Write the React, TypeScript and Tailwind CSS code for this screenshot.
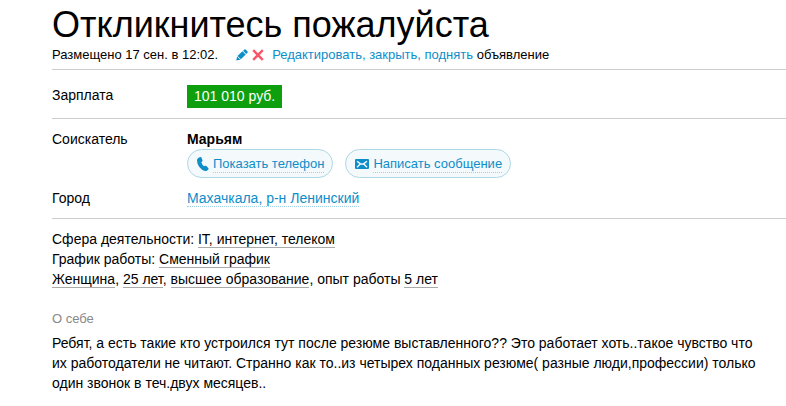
import React from "react";

interface TagProps {
  children: React.ReactNode;
}

// Underlined resume attribute
const Tag: React.FC<TagProps> = ({ children }) => (
  <span className="border-b border-[#aaaaaa]">{children}</span>
);

const PencilIcon: React.FC = () => (
  <svg className="h-3 w-3" viewBox="0 0 12 12" fill="#0d8ec9" aria-hidden="true">
    <path d="M0.3 11.6 1.1 7.5 4.4 10.8z" />
    <path d="M1.5 7 6.4 2.3 9.7 5.5 4.9 10.3z" />
    <path d="M7.1 1.7 8.4 0.6Q9.2 0.1 9.9 0.7L11.4 2.2Q12 2.9 11.5 3.7L10.3 4.9z" />
  </svg>
);

const CrossIcon: React.FC = () => (
  <svg
    className="h-3 w-3"
    viewBox="0 0 12 12"
    stroke="#fa5567"
    strokeWidth="2.4"
    aria-hidden="true"
  >
    <path d="M1.2 1.2 10.8 10.8M10.8 1.2 1.2 10.8" />
  </svg>
);

const PhoneIcon: React.FC = () => (
  <svg className="h-4 w-3" viewBox="0 0 12 16" fill="#0d8ec9" aria-hidden="true">
    <path d="M1.2 2 3.2 1.1Q4.1 0.9 4.5 1.7L5.5 4.2Q5.7 5 5.1 5.5L4.3 6.2Q5.1 8.7 7 10.2L8.1 9.7Q8.9 9.5 9.4 10L11.4 12.2Q11.9 12.9 11.3 13.6L9.9 14.8Q9.1 15.3 8 15Q4.6 14 2.3 11Q0.1 8 0 4.4Q0 2.7 1.2 2z" />
  </svg>
);

const MailIcon: React.FC = () => (
  <svg className="h-[10px] w-[14px]" viewBox="0 0 14 10" aria-hidden="true">
    <rect width="14" height="10" rx="1" fill="#0d8ec9" />
    <path
      d="M2 2.2 5.2 4.6Q7 5.8 8.8 4.6L12 2.2M2 8.2 5.2 5M12 8.2 8.8 5"
      fill="none"
      stroke="#fff"
      strokeWidth="1.3"
    />
  </svg>
);

interface ContactButtonProps {
  icon: React.ReactNode;
  label: string;
}

const ContactButton: React.FC<ContactButtonProps> = ({ icon, label }) => (
  <button
    type="button"
    className="flex h-[29px] items-center gap-1 rounded-full border border-[#add8e6] bg-[#f4f9fc] pr-2 pl-[9px] text-[13px] text-[#0d8ec9]"
  >
    {icon}
    <span className="border-b border-dotted border-[#9ed2e9] pt-px leading-4">
      {label}
    </span>
  </button>
);

const App: React.FC = () => {
  return (
    <main className="bg-white pl-[52px] font-['Liberation_Sans',Arial,sans-serif] text-sm leading-5 text-black">
      <header className="border-b border-[#cccccc] pt-[5px] pb-1">
        <h1 className="text-4xl leading-10">Откликнитесь пожалуйста</h1>
        <div className="flex items-center text-[13px]">
          <span>Размещено 17 сен. в 12:02.</span>
          <span className="ml-[18px] flex gap-1">
            <PencilIcon />
            <CrossIcon />
          </span>
          <span className="ml-2">
            <a href="#edit" className="text-[#0d8ec9]">
              Редактировать, закрыть, поднять
            </a>{" "}
            объявление
          </span>
        </div>
      </header>

      <dl className="flex border-b border-[#cccccc] pt-[15px] pb-[10px]">
        <dt className="w-[135px]">Зарплата</dt>
        <dd className="bg-[#0d9f0d] px-[7px] leading-[23px] text-white">
          101 010 руб.
        </dd>
      </dl>

      <dl className="grid grid-cols-[135px_1fr] gap-y-[10px] border-b border-[#cccccc] py-[10px]">
        <dt>Соискатель</dt>
        <dd>
          <strong className="block">Марьям</strong>
          <div className="flex gap-3">
            <ContactButton icon={<PhoneIcon />} label="Показать телефон" />
            <ContactButton icon={<MailIcon />} label="Написать сообщение" />
          </div>
        </dd>
        <dt>Город</dt>
        <dd>
          <a
            href="#city"
            className="border-b border-dotted border-[#9ed2e9] text-[#0d8ec9]"
          >
            Махачкала, р-н Ленинский
          </a>
        </dd>
      </dl>

      {/* Resume details */}
      <section className="pt-[10px]">
        <p>
          Сфера деятельности: <Tag>IT, интернет, телеком</Tag>
        </p>
        <p>
          График работы: <Tag>Сменный график</Tag>
        </p>
        <p>
          <Tag>Женщина</Tag>, <Tag>25 лет</Tag>, <Tag>высшее образование</Tag>,
          опыт работы <Tag>5 лет</Tag>
        </p>
      </section>

      <section className="pt-5 pr-5">
        <h2 className="pb-1 text-[13px] text-[#888888]">О себе</h2>
        <p>
          Ребят, а есть такие кто устроился тут после резюме выставленного?? Это
          работает хоть..такое чувство что их работодатели не читают. Странно
          как то..из четырех поданных резюме( разные люди,профессии) только один
          звонок в теч.двух месяцев..
        </p>
      </section>
    </main>
  );
};

export default App;
